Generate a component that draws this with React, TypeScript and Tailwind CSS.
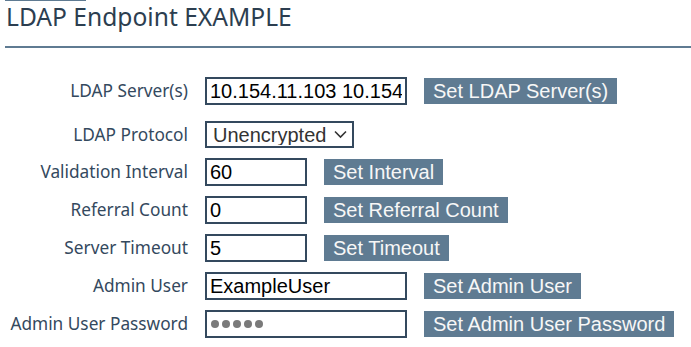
import React from "react";

const labelCls =
  "w-[188px] shrink-0 text-right text-[17.25px] text-[#34495e] font-['Noto_Sans',sans-serif] leading-none whitespace-nowrap";
const inputCls =
  "h-[28px] border-2 border-[#34495e] bg-white px-[3px] text-[20px] text-black font-['Liberation_Sans',Arial,sans-serif] outline-none leading-none";
const btnCls =
  "ml-[17px] h-[26px] bg-[#5f7b92] px-[9px] text-[20px] leading-none text-[#f7f7f7] font-['Liberation_Sans',Arial,sans-serif] whitespace-nowrap";

function Row({
  label,
  children,
  className = "h-[38px]",
}: {
  label: string;
  children: React.ReactNode;
  className?: string;
}) {
  return (
    <div className={`flex items-center ${className}`}>
      <div className={labelCls}>{label}</div>
      <div className="ml-[17px] flex items-center">{children}</div>
    </div>
  );
}

export default function App() {
  return (
    <div className="min-h-[347px] w-[691px] overflow-hidden bg-white pl-[5px]">
      <div className="h-px w-[81px] bg-[#5f7b92]" />
      <div className="pl-[1px] text-[24.6px] leading-[32px] text-[#2c3e50] font-['Noto_Sans',sans-serif]">
        LDAP Endpoint EXAMPLE
      </div>
      <div className="mt-[13px] h-[2px] w-full bg-[#5f7b92]" />
      <div className="-ml-[5px] mt-[24px]">
        <Row label="LDAP Server(s)">
          <input
            className={`${inputCls} w-[202px]`}
            defaultValue="10.154.11.103 10.154.11.104"
          />
          <button className={btnCls}>Set LDAP Server(s)</button>
        </Row>
        <Row label="LDAP Protocol" className="mt-[6px] h-[37px]">
          <div className="relative">
            <select
              className="h-[27px] w-[149px] appearance-none border-2 border-[#34495e] bg-white pl-[6px] text-[20px] leading-none text-[#333] font-['Liberation_Sans',Arial,sans-serif] outline-none"
              defaultValue="Unencrypted"
            >
              <option>Unencrypted</option>
              <option>StartTLS</option>
              <option>LDAPS</option>
            </select>
            <svg
              className="pointer-events-none absolute right-[7px] top-[9px]"
              width="13"
              height="9"
              viewBox="0 0 13 9"
            >
              <path
                d="M1 1.5 L6.5 7 L12 1.5"
                fill="none"
                stroke="#333"
                strokeWidth="1.6"
              />
            </svg>
          </div>
        </Row>
        <Row label="Validation Interval">
          <input className={`${inputCls} w-[102px]`} defaultValue="60" />
          <button className={btnCls}>Set Interval</button>
        </Row>
        <Row label="Referral Count">
          <input className={`${inputCls} w-[102px]`} defaultValue="0" />
          <button className={btnCls}>Set Referral Count</button>
        </Row>
        <Row label="Server Timeout">
          <input className={`${inputCls} w-[102px]`} defaultValue="5" />
          <button className={btnCls}>Set Timeout</button>
        </Row>
        <Row label="Admin User">
          <input
            className={`${inputCls} w-[202px]`}
            defaultValue="ExampleUser"
          />
          <button className={btnCls}>Set Admin User</button>
        </Row>
        <Row label="Admin User Password">
          <div className={`${inputCls} flex w-[202px] items-center gap-[3px] pl-[4px]`}>
            {[0, 1, 2, 3, 4].map((i) => (
              <span
                key={i}
                className="inline-block h-[8px] w-[8px] rounded-full bg-[#7a7a7a]"
              />
            ))}
          </div>
          <button className={btnCls}>Set Admin User Password</button>
        </Row>
      </div>
    </div>
  );
}
